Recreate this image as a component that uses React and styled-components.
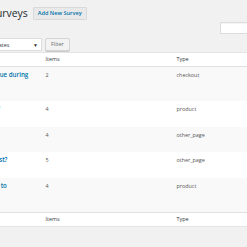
import React from "react";
import styled, { createGlobalStyle } from "styled-components";

const GlobalStyle = createGlobalStyle`
  html, body {
    margin: 0;
    padding: 0;
    background: #f1f1f1;
    overflow: hidden;
  }
  body {
    font-family: "Open Sans", "Liberation Sans", sans-serif;
    color: #444;
  }
`;

const Wrap = styled.div`
  margin-left: -70px;
  width: 380px;
  padding-top: 7px;
`;

const HeadingRow = styled.div`
  display: flex;
  align-items: center;
  gap: 5px;
  height: 12px;
  padding-left: 10px;
`;

const PageTitle = styled.h1`
  margin: 0;
  font-size: 10.4px;
  line-height: 12px;
  font-weight: 400;
  color: #23282d;
`;

const AddButton = styled.a`
  display: inline-block;
  padding: 0 4px;
  height: 11px;
  line-height: 11px;
  border: 1px solid #d9d9d9;
  border-radius: 1px;
  background: #e9e9e9;
  color: #0073aa;
  font-size: 5.6px;
  font-weight: 600;
  text-decoration: none;
`;

const SearchRow = styled.div`
  display: flex;
  justify-content: flex-end;
  margin-top: 3px;
  padding-right: 30px;
`;

const SearchInput = styled.div`
  width: 58px;
  height: 10px;
  background: #fff;
  border: 1px solid #ddd;
  box-shadow: inset 0 1px 1px rgba(0, 0, 0, 0.05);
`;

const Tablenav = styled.div`
  display: flex;
  align-items: center;
  gap: 3px;
  margin-top: 4px;
  padding-left: 50px;
  height: 13px;
`;

const Select = styled.div`
  display: flex;
  align-items: center;
  justify-content: space-between;
  box-sizing: border-box;
  width: 62px;
  height: 13px;
  padding: 0 3px 0 7px;
  background: #fff;
  border: 1px solid #ddd;
  font-size: 5.4px;
  color: #32373c;
`;

const Caret = styled.span`
  font-size: 5px;
  color: #333;
`;

const Button = styled.div`
  box-sizing: border-box;
  height: 13px;
  line-height: 11px;
  padding: 0 5px;
  background: #f3f3f3;
  border: 1px solid #d4d4d4;
  border-radius: 2px;
  box-shadow: 0 1px 0 #ccc;
  font-size: 5.4px;
  color: #666;
`;

const Table = styled.table`
  margin-top: 1px;
  width: 350px;
  table-layout: fixed;
  border-collapse: collapse;
  background: #fff;
  border: 1px solid #e5e5e5;
  box-shadow: 0 1px 1px rgba(0, 0, 0, 0.04);
`;

const Th = styled.th`
  text-align: left;
  font-weight: 400;
  font-size: 5.4px;
  color: #32373c;
  line-height: 8px;
  padding: 2px 4px 3px;
  border-${(p) => (p.$foot ? "top" : "bottom")}: 1px solid #e1e1e1;
`;

const Row = styled.tr`
  background: ${(p) => (p.$alt ? "#f9f9f9" : "#fff")};
`;

const Td = styled.td`
  vertical-align: top;
  padding: 4px;
  font-size: 5.4px;
  line-height: 8.5px;
  color: #555;
`;

const RowTitle = styled.a`
  display: block;
  white-space: nowrap;
  font-size: 6.2px;
  line-height: 8.5px;
  font-weight: 600;
  color: #0073aa;
  text-decoration: none;
`;

const RowActions = styled.div`
  visibility: hidden;
  height: 9px;
  font-size: 5.4px;
`;

const surveys = [
  { lines: ["Did you notice any issue during", "checkout?"], items: 2, type: "checkout" },
  { lines: ["Would you buy again?"], items: 4, type: "product" },
  { lines: ["Page feedback"], items: 4, type: "other_page" },
  { lines: ["Was your checkout fast?"], items: 5, type: "other_page" },
  { lines: ["How likely are buyers to", "recommend us?"], items: 4, type: "product" },
];

export default function App() {
  return (
    <>
      <GlobalStyle />
      <Wrap>
        <HeadingRow>
          <PageTitle>Customer Surveys</PageTitle>
          <AddButton href="#">Add New Survey</AddButton>
        </HeadingRow>
        <SearchRow>
          <SearchInput />
        </SearchRow>
        <Tablenav>
          <Select>
            <span>All dates</span>
            <Caret>▼</Caret>
          </Select>
          <Button>Filter</Button>
        </Tablenav>
        <Table>
          <colgroup>
            <col style={{ width: 111 }} />
            <col style={{ width: 131 }} />
            <col style={{ width: 90 }} />
            <col />
          </colgroup>
          <thead>
            <tr>
              <Th>Title</Th>
              <Th>Items</Th>
              <Th>Type</Th>
              <Th>Date</Th>
            </tr>
          </thead>
          <tbody>
            {surveys.map((s, i) => (
              <Row key={i} $alt={i % 2 === 0}>
                <Td>
                  {s.lines.map((l) => (
                    <RowTitle href="#" key={l}>
                      {l}
                    </RowTitle>
                  ))}
                  <RowActions>Edit | Trash</RowActions>
                </Td>
                <Td>{s.items}</Td>
                <Td>{s.type}</Td>
                <Td>Published</Td>
              </Row>
            ))}
          </tbody>
          <tfoot>
            <tr>
              <Th $foot>Title</Th>
              <Th $foot>Items</Th>
              <Th $foot>Type</Th>
              <Th $foot>Date</Th>
            </tr>
          </tfoot>
        </Table>
      </Wrap>
    </>
  );
}
